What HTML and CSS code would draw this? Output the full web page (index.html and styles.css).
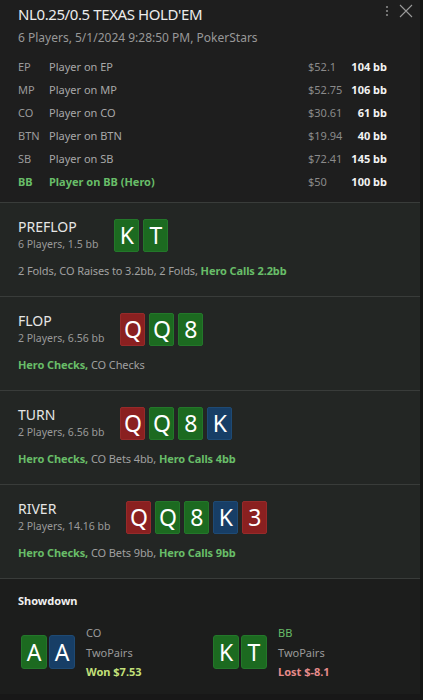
FILE: index.html
```html
<!DOCTYPE html>
<html lang="en">
<head>
    <meta charset="UTF-8">
    <meta name="viewport" content="width=device-width, initial-scale=1.0">
    <title>Hand History</title>
    <link rel="stylesheet" href="styles.css">
</head>
<body>
    <div class="panel">
        <div class="header">
            <div class="title-row">
                <div class="title">NL0.25/0.5 TEXAS HOLD'EM</div>
                <div class="tools">
                    <svg class="icon" width="10" height="14" viewBox="0 0 10 14">
                        <circle cx="5" cy="3" r="1.1" fill="#8a8a8a"/>
                        <circle cx="5" cy="7" r="1.1" fill="#8a8a8a"/>
                        <circle cx="5" cy="11" r="1.1" fill="#8a8a8a"/>
                    </svg>
                    <svg class="icon" width="14" height="14" viewBox="0 0 14 14">
                        <path d="M1 1 L13 13 M13 1 L1 13" stroke="#9a9a9a" stroke-width="1.1" fill="none"/>
                    </svg>
                </div>
            </div>
            <div class="subtitle">6 Players, 5/1/2024 9:28:50 PM, PokerStars</div>

            <div class="players">
                <div class="pos">EP</div><div class="name">Player on EP</div><div class="cash">$52.1</div><div class="bb">104 bb</div>
                <div class="pos">MP</div><div class="name">Player on MP</div><div class="cash">$52.75</div><div class="bb">106 bb</div>
                <div class="pos">CO</div><div class="name">Player on CO</div><div class="cash">$30.61</div><div class="bb">61 bb</div>
                <div class="pos">BTN</div><div class="name">Player on BTN</div><div class="cash">$19.94</div><div class="bb">40 bb</div>
                <div class="pos">SB</div><div class="name">Player on SB</div><div class="cash">$72.41</div><div class="bb">145 bb</div>
                <div class="pos hero">BB</div><div class="name hero">Player on BB (Hero)</div><div class="cash">$50</div><div class="bb">100 bb</div>
            </div>
        </div>

        <div class="street">
            <div class="street-head">
                <div>
                    <div class="street-name">PREFLOP</div>
                    <div class="street-info">6 Players, 1.5 bb</div>
                </div>
                <div class="cards">
                    <span class="card green">K</span><span class="card green">T</span>
                </div>
            </div>
            <div class="actions">2 Folds, CO Raises to 3.2bb, 2 Folds, <b class="hero">Hero Calls 2.2bb</b></div>
        </div>

        <div class="street">
            <div class="street-head">
                <div>
                    <div class="street-name">FLOP</div>
                    <div class="street-info">2 Players, 6.56 bb</div>
                </div>
                <div class="cards">
                    <span class="card red">Q</span><span class="card green">Q</span><span class="card green">8</span>
                </div>
            </div>
            <div class="actions"><b class="hero">Hero Checks,</b> CO Checks</div>
        </div>

        <div class="street">
            <div class="street-head">
                <div>
                    <div class="street-name">TURN</div>
                    <div class="street-info">2 Players, 6.56 bb</div>
                </div>
                <div class="cards">
                    <span class="card red">Q</span><span class="card green">Q</span><span class="card green">8</span><span class="card blue">K</span>
                </div>
            </div>
            <div class="actions"><b class="hero">Hero Checks,</b> CO Bets 4bb, <b class="hero">Hero Calls 4bb</b></div>
        </div>

        <div class="street">
            <div class="street-head">
                <div>
                    <div class="street-name">RIVER</div>
                    <div class="street-info">2 Players, 14.16 bb</div>
                </div>
                <div class="cards">
                    <span class="card red">Q</span><span class="card green">Q</span><span class="card green">8</span><span class="card blue">K</span><span class="card red">3</span>
                </div>
            </div>
            <div class="actions"><b class="hero">Hero Checks,</b> CO Bets 9bb, <b class="hero">Hero Calls 9bb</b></div>
        </div>

        <div class="showdown">
            <div class="showdown-title">Showdown</div>
            <div class="hands">
                <div class="hand">
                    <div class="cards tight">
                        <span class="card big green">A</span><span class="card big blue">A</span>
                    </div>
                    <div class="hand-info">
                        <div>CO</div>
                        <div>TwoPairs</div>
                        <div class="won">Won $7.53</div>
                    </div>
                </div>
                <div class="hand">
                    <div class="cards tight">
                        <span class="card big green">K</span><span class="card big green">T</span>
                    </div>
                    <div class="hand-info">
                        <div class="hero-text">BB</div>
                        <div>TwoPairs</div>
                        <div class="lost">Lost $-8.1</div>
                    </div>
                </div>
            </div>
        </div>
    </div>
</body>
</html>
```

FILE: styles.css
```css
body {
    margin: 0;
    background-color: #181818;
    font-family: "Noto Sans", "Open Sans", sans-serif;
    color: #a4a4a4;
    font-size: 11px;
}
.panel {
    width: 420px;
    height: 700px;
    border-right: 3px solid #141614;
    background-color: #181818;
    overflow: hidden;
}
.header {
    background-color: #1e1e1e;
    padding: 3px 33px 9px 18px;
    border-bottom: 1px solid #393c3a;
}
.title-row {
    display: flex;
    justify-content: space-between;
    align-items: center;
}
.title {
    font-size: 15px;
    line-height: 22px;
    letter-spacing: -0.4px;
    color: #ececec;
}
.tools {
    display: flex;
    align-items: center;
    gap: 7px;
    margin-right: -26px;
    margin-top: -6px;
}
.subtitle {
    margin-top: 4px;
    line-height: 18px;
    color: #989898;
    font-size: 12px;
}
.players {
    margin-top: 8px;
    display: grid;
    grid-template-columns: 31px 1fr 34px 45px;
    grid-auto-rows: 23px;
    align-items: center;
    font-size: 11px;
}
.pos {
    color: #9a9a9a;
}
.name {
    color: #a8a8a8;
}
.cash {
    color: #8a8a8a;
}
.bb {
    text-align: right;
    color: #f2f2f2;
    font-weight: bold;
}
.hero {
    color: #68bd68;
    font-weight: bold;
}
.street {
    background-color: #232624;
    border-bottom: 1px solid #393c3a;
    padding: 14px 18px 17px;
}
.street-head {
    display: flex;
    align-items: center;
    gap: 16px;
}
.street-name {
    font-size: 14px;
    line-height: 19px;
    color: #e6e6e6;
}
.street-info {
    line-height: 17px;
    color: #9a9a9a;
    font-size: 10.5px;
}
.cards {
    display: flex;
    gap: 4px;
}
.cards.tight {
    gap: 2px;
}
.card {
    width: 25px;
    height: 33px;
    border-radius: 2px;
    color: #ffffff;
    font-size: 23px;
    line-height: 31px;
    text-align: center;
    box-sizing: border-box;
}
.card.big {
    width: 26px;
    height: 34px;
    line-height: 32px;
    border-radius: 3px;
}
.green {
    background-color: #1c6a20;
    border: 1px solid #23772a;
}
.red {
    background-color: #8a2020;
    border: 1px solid #962a2a;
}
.blue {
    background-color: #173e66;
    border: 1px solid #1e4a74;
}
.actions {
    margin-top: 10px;
    line-height: 16px;
    color: #a0a0a0;
    font-size: 11px;
    letter-spacing: -0.1px;
}
.showdown {
    background-color: #1c1d1c;
    padding: 14px 18px 10px;
    height: 91px;
}
.showdown-title {
    color: #f0f0f0;
    font-weight: bold;
    font-size: 11px;
    line-height: 16px;
}
.hands {
    margin-top: 14px;
    display: grid;
    grid-template-columns: 1fr 1fr;
}
.hand {
    display: flex;
    align-items: center;
    gap: 11px;
    padding-left: 3px;
}
.hand-info {
    line-height: 19.5px;
    color: #9a9a9a;
    font-size: 11px;
}
.hero-text {
    color: #68bd68;
}
.won {
    color: #c3e07a;
    font-weight: bold;
}
.lost {
    color: #e58a8a;
    font-weight: bold;
}
```
